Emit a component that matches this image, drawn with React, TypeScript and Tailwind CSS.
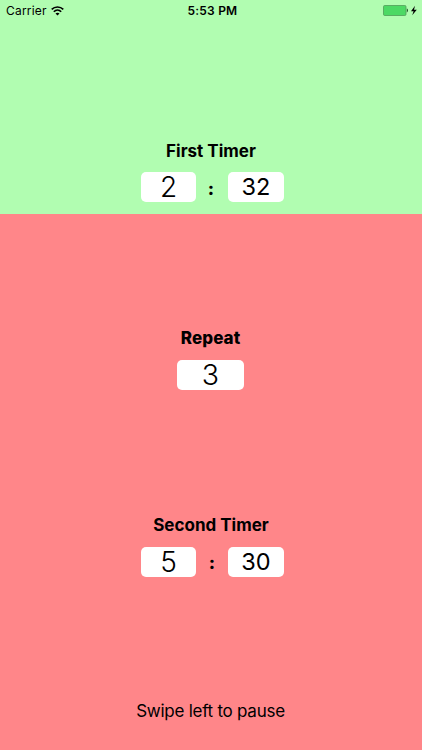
import React from "react";

interface TimerProps {
    title: string;
    minutes: string;
    seconds: string;
    gapClass: string;
    colonClass: string;
}

const WifiIcon: React.FC = () => (
    <svg width="13" height="10" viewBox="0 0 13 10" fill="none" stroke="#000" strokeWidth="1.6">
        <path d="M0.7 3.4C3.9 0.2 9.1 0.2 12.3 3.4" />
        <path d="M2.8 5.7C4.9 3.6 8.1 3.6 10.2 5.7" />
        <path d="M6.5 9.6L4.5 7.5C5.6 6.4 7.4 6.4 8.5 7.5Z" fill="#000" stroke="none" />
    </svg>
);

const BatteryIcon: React.FC = () => (
    <svg width="35" height="12" viewBox="0 0 35 12">
        <rect x="0.5" y="0.5" width="22.5" height="10" rx="1.2" fill="#4cd964" stroke="#4f9d58" strokeWidth="0.8" />
        <path d="M23.8 3.6C25.4 3.9 25.4 7.1 23.8 7.4Z" fill="#22552a" />
        <path d="M32 0.8L28 6.2H30.6L29.2 10.2L33.8 4.7H31Z" fill="#000" />
    </svg>
);

const StatusBar: React.FC = () => (
    <header className="grid h-[22px] grid-cols-3 items-center pr-1 pl-[6px] text-[12px] leading-[22px]">
        <div className="flex items-center gap-1">
            <span className="tracking-[0.2px]">Carrier</span>
            <WifiIcon />
        </div>
        <span className="pl-px text-center font-semibold tracking-[0.2px]">5:53 PM</span>
        <div className="flex justify-end">
            <BatteryIcon />
        </div>
    </header>
);

const Timer: React.FC<TimerProps> = ({ title, minutes, seconds, gapClass, colonClass }) => (
    <section className="flex flex-col items-center">
        <h2 className="text-[17px] leading-6 font-bold whitespace-nowrap">{title}</h2>
        <div className={`ml-[3px] flex h-[30px] ${gapClass}`}>
            <div className="w-[55px] rounded-[5px] bg-white text-center text-[28px] leading-[30px] font-light">
                {minutes}
            </div>
            <div className={`w-8 text-center text-[18px] leading-[30px] font-extrabold ${colonClass}`}>:</div>
            <div className="w-14 rounded-[5px] bg-white text-center text-[23.5px] leading-[30px]">{seconds}</div>
        </div>
    </section>
);

const App: React.FC = () => {
    return (
        <main className="h-[750px] w-[422px] overflow-hidden bg-[#ff8689] font-['Inter',sans-serif] text-black">
            <div className="h-[214px] bg-[#b1fdb1]">
                <StatusBar />
                <div className="pt-[117px]">
                    <Timer title="First Timer" minutes="2" seconds="32" gapClass="mt-[9px]" colonClass="pt-[2px] pr-[2px]" />
                </div>
            </div>

            <section className="flex flex-col items-center pt-28 pr-px">
                <h2 className="text-[17px] leading-6 font-extrabold tracking-[0.1px]">Repeat</h2>
                <div className="mt-[10px] h-[30px] w-[67px] rounded-[5px] bg-white text-center text-[28.5px] leading-[30px] font-light">
                    3
                </div>
            </section>

            <div className="pt-[123px]">
                <Timer title="Second Timer" minutes="5" seconds="30" gapClass="mt-[10px]" colonClass="pt-px" />
            </div>

            <p className="pt-[122px] pr-px text-center text-[17px] leading-6 tracking-[-0.26px]">Swipe left to pause</p>
        </main>
    );
};

export default App;
